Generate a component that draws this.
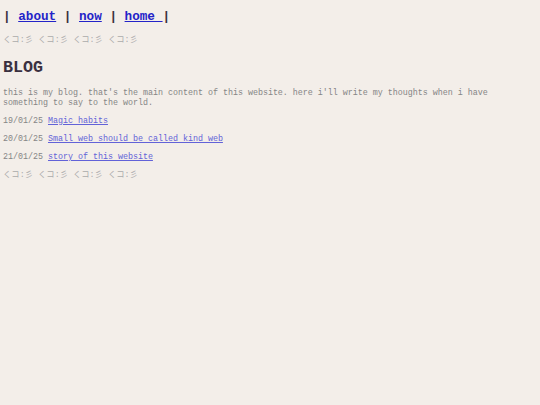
export default function App() {
  const mono = { fontFamily: '"Courier New", "Nimbus Mono PS", "FreeMono", "Liberation Mono", "Noto Sans CJK JP", monospace' };
  const kao = "くコ:彡 くコ:彡 くコ:彡 くコ:彡";
  const posts = [
    ["19/01/25", "Magic habits"],
    ["20/01/25", "Small web should be called kind web"],
    ["21/01/25", "story of this website"],
  ];
  return (
    <div className="min-h-[405px] w-full bg-[#f3eee9] px-[3px] text-[#858585]" style={mono}>
      <nav className="pt-[9px] text-[12.67px] font-bold leading-[16px] text-[#3a3040] whitespace-pre">
        {"| "}
        <a href="#" className="text-[#2323c8] underline">about</a>
        {" | "}
        <a href="#" className="text-[#2323c8] underline">now</a>
        {" | "}
        <a href="#" className="text-[#2323c8] underline">{"home "}</a>
        {"|"}
      </nav>
      <div className="mt-[10px] text-[8.33px] leading-[10px] text-[#ababab] whitespace-pre">{kao}</div>
      <h1 className="mt-[13px] text-[16.67px] font-bold leading-[20px] text-[#3a3040]">BLOG</h1>
      <p className="mt-[10px] text-[8.33px] leading-[10px] pr-[40px]">
        this is my blog. that's the main content of this website. here i'll write my thoughts when i have something to say to the world.
      </p>
      {posts.map(([d, t]) => (
        <div key={d} className="mt-[8px] text-[8.33px] leading-[10px]">
          {d}{" "}
          <a href="#" className="text-[#6262d8] underline">{t}</a>
        </div>
      ))}
      <div className="mt-[8px] text-[8.33px] leading-[10px] text-[#ababab] whitespace-pre">{kao}</div>
    </div>
  );
}
